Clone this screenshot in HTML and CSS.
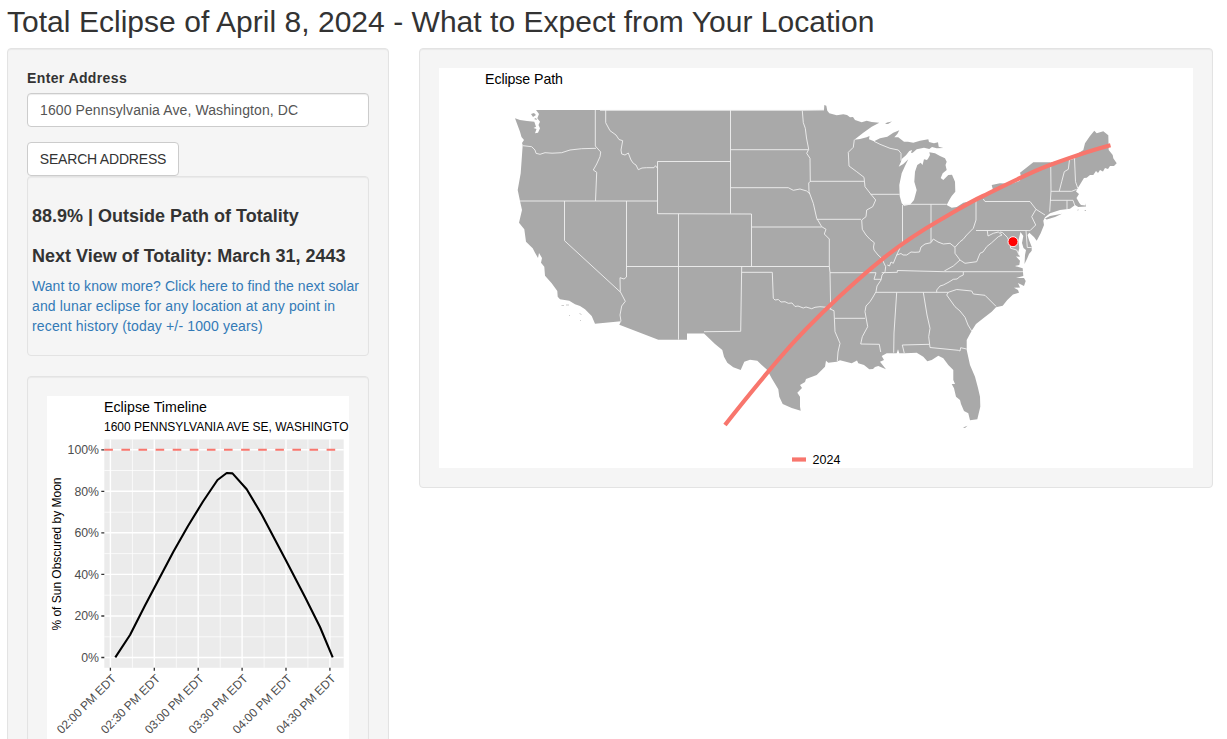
FILE: index.html
```html
<!DOCTYPE html>
<html lang="en">
<head>
<meta charset="utf-8">
<title>Total Eclipse of April 8, 2024</title>
<link rel="stylesheet" href="styles.css">
</head>
<body>
<h2 class="page-title">Total Eclipse of April 8, 2024 - What to Expect from Your Location</h2>
<div class="layout">
  <form class="well sidebar">
    <label class="field-label" for="address">Enter Address</label>
    <input class="field" id="address" type="text" value="1600 Pennsylvania Ave, Washington, DC">
    <button class="btn" type="button">SEARCH ADDRESS</button>
    <div class="well summary">
      <h4 class="fact">88.9% | Outside Path of Totality</h4>
      <h4 class="fact">Next View of Totality: March 31, 2443</h4>
      <a class="more" href="#"><span class="lead">Want to know more? Click here to find the next solar</span> and lunar eclipse for any location at any point in recent history (today +/- 1000 years)</a>
    </div>
    <div class="well">
      <svg class="plot" width="302" height="400" viewBox="47 396 302 400">
        <text class="title" x="104" y="412" textLength="103">Eclipse Timeline</text>
        <text class="subtitle" x="104" y="431" textLength="244.5">1600 PENNSYLVANIA AVE SE, WASHINGTO</text>
        <rect class="panel" x="104.3" y="439.4" width="239.4" height="228.4"/>
        <path class="minor" d="M104.3 470.5h239.4M104.3 512.2h239.4M104.3 553.6h239.4M104.3 595.2h239.4M104.3 636.8h239.4M132.4 439.4v228.4M176.3 439.4v228.4M220.2 439.4v228.4M264.1 439.4v228.4M307.9 439.4v228.4"/>
        <path class="major" d="M104.3 449.8h239.4M104.3 491.3h239.4M104.3 532.8h239.4M104.3 574.4h239.4M104.3 616h239.4M104.3 657.5h239.4M110.4 439.4v228.4M154.3 439.4v228.4M198.2 439.4v228.4M242.1 439.4v228.4M286 439.4v228.4M329.9 439.4v228.4"/>
        <path class="tick" d="M101.3 449.8h3M101.3 491.3h3M101.3 532.8h3M101.3 574.4h3M101.3 616h3M101.3 657.5h3M110.4 667.8v3M154.3 667.8v3M198.2 667.8v3M242.1 667.8v3M286 667.8v3M329.9 667.8v3"/>
        <path class="full-line" d="M104.3 449.8h239.4"/>
        <path class="coverage" d="M115.3 657.3L130 635L145 605.5L173.5 551.5L188 526L203 501.5L217.5 480L226.7 473L232.5 473.4L246.7 489.2L261.7 514.5L286 560.5L305 597L320 627L332.7 657.3"/>
        <g class="axis ylab">
          <text x="99" y="454">100%</text>
          <text x="99" y="495.5">80%</text>
          <text x="99" y="537">60%</text>
          <text x="99" y="578.6">40%</text>
          <text x="99" y="620.2">20%</text>
          <text x="99" y="661.7">0%</text>
        </g>
        <g class="axis xlab">
          <text transform="translate(117 679.3) rotate(-45)" textLength="78">02:00 PM EDT</text>
          <text transform="translate(160.9 679.3) rotate(-45)" textLength="78">02:30 PM EDT</text>
          <text transform="translate(204.8 679.3) rotate(-45)" textLength="78">03:00 PM EDT</text>
          <text transform="translate(248.7 679.3) rotate(-45)" textLength="78">03:30 PM EDT</text>
          <text transform="translate(292.6 679.3) rotate(-45)" textLength="78">04:00 PM EDT</text>
          <text transform="translate(336.5 679.3) rotate(-45)" textLength="78">04:30 PM EDT</text>
        </g>
        <text class="y-title" transform="translate(61 630.5) rotate(-90)" textLength="153">% of Sun Obscured by Moon</text>
      </svg>
    </div>
  </form>
  <main class="well map-panel">
    <svg class="plot" width="754" height="400" viewBox="439 68 754 400">
      <text class="title" x="485" y="84" textLength="78">Eclipse Path</text>
      <path class="land" d="M515 118.3L520 120L527 121L534.3 121.7L536 126.7L533.5 128L536.5 129L535 133.3L538 132.7L540 128.3L538.5 125L540 121.7L537.3 118.3L539 114L536 110H824L824.3 105L826.3 105.7L827.3 110.7L829.3 113.3L836.7 115.3L843.3 114.3L847 115L850 117.3L853 117L855 120L861.7 122.3L866.7 120.7L871.7 122L879.3 122.7L871.7 126.7L863.3 132.7L854.3 139.7L860 139L866.7 137.3L869.5 136L869 139.3L874 141.3L880 138.3L887.3 136.7L893.3 132.7L899.3 130.3L897.3 134L894.3 137.3L898.3 137.3L904 141.7L908 141.7L913.3 142.7L920 140.7L928.3 139.3L929 142L934 143.3L938 142.3L938.7 146.7L943.3 148L936.7 148.3L932 147L929.3 149L924 147.7L916.7 149.3L912.7 152.7L911 153L912 150L909.3 151L906 155.3L901.7 159L901 161.7L898.7 166.7L903.3 164L908.3 159.3L905 166L901.7 173.3L899.3 185L899.7 196L901.7 203.3L904 205.7L910 204.7L914 200L916.7 190L914.3 181.7L915 171.7L917.3 165L920.7 162.7L922.5 165L924 159.3L927 160L928.3 158.3L930 155L929.3 152.3L935 153.3L940 156L945 158.3L946.7 161.7L945.5 165L946.7 170L942.7 173.3L940.7 178L943.3 180L948.3 175L952 174.7L955 181.7L955.3 191.7L951.7 196L949.3 200L946.7 205L951.7 207.7L956.7 207L963.3 202.7L976 200L985 196L993 190L991.7 185L1000 183.3L1011.7 183.7L1020 180.7L1021 176L1020 172.7L1033.3 162.3H1050.7L1069.3 160L1075 158.7L1077 154L1083.3 150L1085 143.3L1090 136L1094.3 130.7L1096.7 133.3L1103.3 131.3L1108.3 135.3L1108.7 150L1112.7 155L1113.3 158.3L1116.7 163.3L1114 166L1110 166L1108 169L1105 168L1103 171.5L1100 170L1098 173L1096 171L1093.3 175L1090 175L1086.7 177.7L1084 178L1081.7 181.7L1077.7 188.3L1076 191.5L1079 194L1076.5 198L1079.3 203L1081 205L1085.3 205.5L1085.3 203.3L1086 206.5L1078.3 207L1075 205L1070 208.7L1060 210L1050 213.3L1045 217.3L1043.3 220.7L1044 225L1040.7 233.3L1036.7 240.7L1034 237L1029.3 232.7L1027.5 235L1029 240L1031.7 246.7L1031.7 250.7L1029 254L1027.3 258.3L1024.5 264L1025 255L1026 250L1023.5 248L1022 243L1023.3 236L1020.5 232L1018.5 240L1019.3 248.3L1018 253L1020 256.7L1016 256.5L1020 260.7L1019.3 265L1015 266L1022.7 268.3L1023.3 276L1016 278L1024 278L1025.7 281L1024 286L1018 283L1020 287.5L1014 287.7L1018 290L1019 292.7L1013 294.5L1007.3 300L1002.7 305.7L996 307.3L991.7 311.7L983.3 318.3L976 324L971.7 330.7L966.7 340V350L970 365L975 376.7L978 388L980 396.7L980.3 406.7L977.3 419.3L970 420.3L968.3 413.3L964 411L961 404L960 400L956 396.7L954 388.3L951.7 384L955 384L953.3 380V370L948.3 365L943.3 358.3L938.3 355.7L931.7 360L927.3 361.3L923.3 356.7L916.7 352.7L905 353.3H899.3L898 349.3L896.7 353.3L886.7 353.3L881.7 356L884 360L880 361.7L886 369.3L878.3 366L875 367L873 369L869.3 369.3L864 365L858.3 363.3L857 360.5L851.7 363.3L840 360.3L836.7 361.7L828.3 362.7L826 360.7L825 366.7L816.7 375L806 379L805 382L800 385L802 388L797.3 392.7L800 396.7V406.7L800.7 410.7L791.7 408L782.7 404L779.3 396.7L778.3 389.3L771.7 378.3L767.3 370L761.7 365L757.3 360.7L750 359.7L744.3 361.7L740.7 370L733.3 367.3L727.3 362.7L724 356.7L722.3 350L715 344L704 333.5H687V339.7H658.3L619.3 324.7L621 321.3L595 323.7L591.7 316L585 309.3L580 306L575 304.3L569.3 300.7L560 299.3L557.7 296.7L557.3 291L551.7 283.3L545 275.7L544.3 266.7L541 262.7L542 258L539 253L538 258L535 252.7L532.7 248.3L526 241.7L524.3 229.3L519 222.7L522 210L520 201L517.7 190L520.7 173.3L522 155L522.7 145L522 143L524 140L521.5 137L520 131.7Z"/>
      <path class="land" d="M1045 218.5L1050 216L1062 213.7L1055 217L1046.7 219.5ZM885 124L887 122.5L892 121.5L888 124ZM963 427.5L967.5 425.8L965 428ZM1077 210L1079 209.5L1078 210.5ZM1084 210L1086 210V211ZM531 114l3-1l2 2l-3 2ZM534 119l2-1l1 2Z"/>
      <path class="islet" d="M561.5 305.5h2.5M566 305h3M569 315.5h1M579.5 313.5l2 1M580 320.5h1"/>
      <path class="state" d="M523 145.7L531.7 146.7L535 150L536 153.3L540 154.3L545 152.7L552 153.2L561.7 152.7L570 150L581.7 148.7L596 148.3M595.3 110V146L600.7 152L600 156.7L596.7 164L593.3 170L596.7 172.3L595.5 201M605.7 110V122.7L610 130.7L616 135L619 139.5L622.7 140.7L621 150L621.7 154L625 155L628.3 153L631 160L633.3 163.3L636 165L638.3 169.7L642 168L646.7 167.7L654 167.7L655.5 165.7L657.5 168.3M730.5 161.5H657.5V213.7L751.5 214V266.3M520 201H657.5M564.5 201V240.7L620.3 292M626.5 201V277L624 279L620 277.7L620.3 291.7L625.3 301.3L621.7 306L620 315L621 321.3M626.5 266.5H829.3M678.5 213.7V339.7M751.5 227H821.7M730.5 110V213.7M600 110.3H802L824 110M730.5 149.7H808.5M730.5 187.7H788.3L793.3 190.3L800 189L806.7 191L810 194M802.3 110.7L803.3 122.7L805.3 128.3L806.5 138L808.7 149.3L806.7 153.3L810 158.3L810.3 181.3L808.7 183L809 191.7L813.3 203.3L816.7 218.3L821.7 226.7L826 229.3L824.3 234L829.3 239V266.3L830 272.7L830.7 309.3L834 310.7L835 331.7L840 343.3L838 352L837.3 361M810 181.3H864M816.7 219.3H861M854.3 139.7L853.3 147.3L848.3 152.3L849 166L856.7 171.7L864 177.3L865 186.7L870.7 194L875.7 200L872.7 206.7L866.7 210L866 216.7L861.7 220L862.3 229.3L866 235L870 239.3L874.3 242.7L873.5 247L874 250L878 255L881.7 258.3L885.7 266.7L885 271.7L882 275L881 280L877 286L876 291.7L873 297L870 301.7L866 306L865 311.7L867.7 326.7L862.3 336.7L860.7 344L879.3 344.3L880.7 352M870.7 194.3H899.7M874 141.3L880 144.3L890 148.3L898.3 150L901 153.3V160.7M902.5 205V241.7L899 250L896.7 255L893.3 263.3L891 262L889.5 266L887.3 265M896.7 255L901 253.5L903 255L906.7 255L911 252L915 252.3L919.5 252L921 247L925 244L931 242.7L933.3 239L938 242L943.3 244L950 243.3L955 247.3L960 241.7L963 239.5L966.7 235L973.3 228.3L976 220V198M904 204.3H946.7M931 204.3V242M955 247.3V253.3L960 260L953.3 266L944.3 271M960 260L965 263.3L976.7 261.7L980 253.3L983 252L986.7 246.7L991.7 242.7L998.3 236.7L1002 235L998.3 232L993.3 233.3L988 236L987.3 230.7M1000 232L1002.7 232.7L1007.3 237.3L1010 243.3L1010.7 248.3L1016.7 250L1019 255M976 230.5H1027L1030 230.7L1035.7 225L1031.7 216.7L1036 209.3L1030 201.5H985L983.3 199M1026 230.7L1027.3 247.5H1031.7M1036 209.3L1045 215M1050.7 162.3L1051 191L1049.7 211.7M1051 191.3H1071.7L1076.7 189.3M1050 200.3H1073L1075 206M1067 200.3V209M1069.5 160L1068.3 169.3L1064.3 171.7L1061.7 181.7L1059.3 191M1074.5 158.7L1075.5 181.7L1077.7 188M830 272.7H876L874 279.3H881M881.7 272.7L897.3 272.3V270.5L944.3 271.7H1023M876 292.3H948.3L956.7 289.5L971.7 291L973.3 294L985 295.3L996 306.3M963.3 272V275L960 276.5L957 279L953.3 279.3L949 282L943.3 285L940 286L936.7 290V292.3M948.3 292.3L946.7 295L955 306.7L960 311L965 317.3L968 325L971.7 331M896.7 292.3L894 333L893.7 352.7M923.3 292.3L927 315L930 328.3L928.7 336.7L930 347.5L958.3 350.3L960 351L960.7 347.7L966.7 349M929.3 344.3L902.3 345L904.3 353.3M835 318.3H865M741.7 266.3L740.7 331.3L704 331.7M741.7 272.3H772.3L773.3 298.3L775 300L778.3 299.5L781 302L785 301.7L788.3 303.3L792 303L795 306.5L798 306L803.3 308L806 307L811.7 308.7L815 307.3L820 306.7L826.7 307.3L830.7 309.3"/>
      <path class="eclipse-path" d="M725 425C745 399.5 762 379 778 360S820 314.5 840 296S868 270.5 883.3 258.3S920 231.5 940 220S968 203 983 196S1028 173 1050 165S1090 150.5 1110.5 145.3"/>
      <circle class="pin" cx="1013" cy="241.7" r="5"/>
      <path class="eclipse-path" d="M792 459.5h14"/>
      <text class="legend" x="812.5" y="464" textLength="28">2024</text>
    </svg>
  </main>
</div>
</body>
</html>
```

FILE: styles.css
```css
* {
  box-sizing: border-box;
}

html {
  overflow: hidden;
}

body {
  height: 739px;
  margin: 0;
  padding: 5px 14px 0 7px;
  overflow: hidden;
  background: #fff;
  color: #333;
  font: 14px/20px "Liberation Sans", Arial, sans-serif;
}

.page-title {
  margin: 0 0 10px;
  font-size: 30px;
  font-weight: 400;
  line-height: 33px;
  letter-spacing: .03px;
}

.layout {
  display: grid;
  grid-template-columns: 382px 794px;
  gap: 30px;
  align-items: start;
}

.well {
  padding: 19px;
  border: 1px solid #e3e3e3;
  border-radius: 4px;
  background: #f5f5f5;
  box-shadow: inset 0 1px 1px rgba(0, 0, 0, .05);
}

.field-label {
  display: block;
  margin-bottom: 5px;
  font-weight: 700;
  letter-spacing: .38px;
}

.field {
  display: block;
  width: 100%;
  height: 34px;
  margin-bottom: 15px;
  padding: 6px 12px;
  border: 1px solid #ccc;
  border-radius: 4px;
  background: #fff;
  box-shadow: inset 0 1px 1px rgba(0, 0, 0, .075);
  color: #555;
  font: inherit;
  letter-spacing: .1px;
}

.btn {
  display: block;
  width: 152px;
  height: 34px;
  padding: 6px 0;
  border: 1px solid #ccc;
  border-radius: 4px;
  background: #fff;
  color: #333;
  font: inherit;
  letter-spacing: -.2px;
  white-space: nowrap;
}

.summary {
  height: 180px;
  margin-bottom: 20px;
  padding: 29px 4px 0;
}

.fact {
  margin: 0 0 20px;
  font-size: 18px;
  line-height: 20px;
}

.fact + .fact {
  margin-bottom: 10px;
}

.more {
  display: block;
  color: #337ab7;
  letter-spacing: .15px;
  text-decoration: none;
}

.lead {
  letter-spacing: .06px;
}

.plot {
  display: block;
  background: #fff;
  font-family: "Liberation Sans", Arial, sans-serif;
}

.title {
  font-size: 14.2px;
  fill: #000;
}

.subtitle,
.y-title {
  font-size: 12px;
  fill: #000;
}

.legend {
  font-size: 12.5px;
  fill: #000;
}

.axis {
  font-size: 12px;
  fill: #4d4d4d;
  text-anchor: end;
}

.ylab {
  font-size: 12.3px;
}

.panel {
  fill: #ebebeb;
}

.minor,
.major,
.tick,
.full-line,
.coverage,
.state,
.islet,
.eclipse-path {
  fill: none;
}

.minor {
  stroke: #fff;
  stroke-width: .7;
}

.major {
  stroke: #fff;
  stroke-width: 1.4;
}

.tick {
  stroke: #333;
  stroke-width: 1.3;
}

.full-line {
  stroke: #f8766d;
  stroke-width: 2;
  stroke-dasharray: 8.6 8.5;
}

.coverage {
  stroke: #000;
  stroke-width: 2.1;
  stroke-linejoin: round;
}

.land {
  fill: #a9a9a9;
}

.islet {
  stroke: #a9a9a9;
  stroke-width: .6;
}

.state {
  stroke: #f0f0f0;
  stroke-width: .9;
  stroke-linejoin: round;
}

.eclipse-path {
  stroke: #f8766d;
  stroke-width: 4.2;
}

.pin {
  fill: #f00;
  stroke: #fff;
  stroke-width: .9;
}
```
